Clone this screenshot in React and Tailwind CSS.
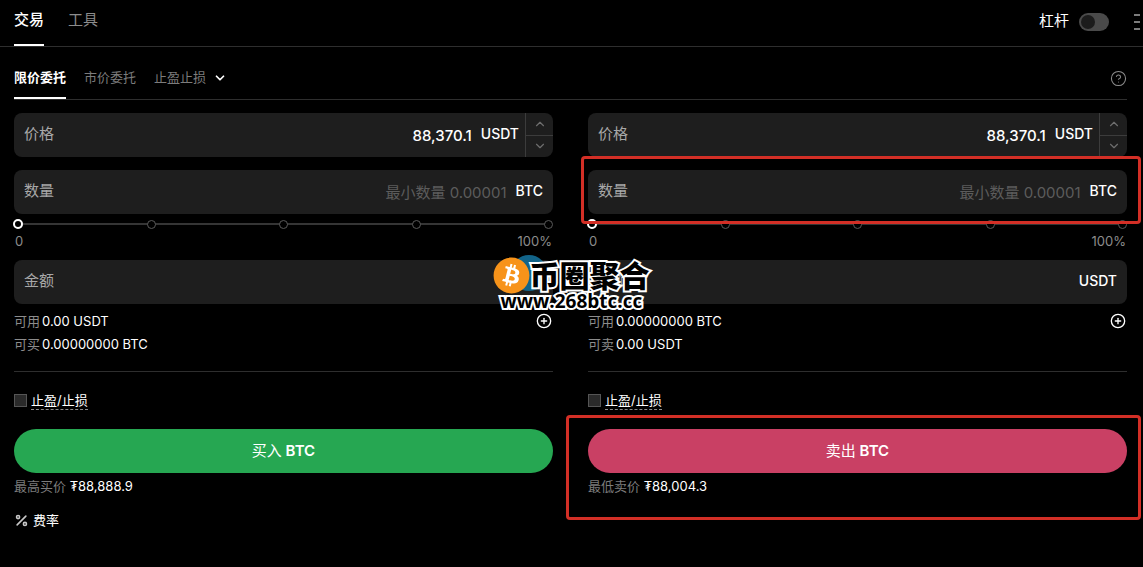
import { useState } from "react";
import { ChevronDown, ChevronUp, CirclePlus, CircleQuestionMark, Percent } from "lucide-react";
import { FaBitcoin } from "react-icons/fa";

const sides = [
    {
        id: "buy",
        available: "0.00 USDT",
        limitLabel: "可买",
        limit: "0.00000000 BTC",
        action: "买入",
        priceLabel: "最高买价",
        price: "₮88,888.9",
        color: "bg-[#26a752]",
    },
    {
        id: "sell",
        available: "0.00000000 BTC",
        limitLabel: "可卖",
        limit: "0.00 USDT",
        action: "卖出",
        priceLabel: "最低卖价",
        price: "₮88,004.3",
        color: "bg-[#c94064]",
        marked: true,
    },
];

const Highlight = ({ className }) => (
    <div className={`absolute border-3 border-[#d32f26] rounded-sm pointer-events-none z-10 ${className}`} />
);

const Field = ({ id, label, unit, placeholder, defaultValue, stepper }) => (
    <div className="flex h-11 leading-[42px] rounded-lg bg-[#1e1e1e] overflow-hidden">
        <label htmlFor={id} className="pl-[10px] text-[15px] text-[#a8a8a8] shrink-0">{label}</label>
        <input
            id={id}
            defaultValue={defaultValue}
            placeholder={placeholder}
            className="flex-1 min-w-0 h-11 bg-transparent outline-none text-right text-[15px] font-medium placeholder:font-normal placeholder:text-[#5c5c5c]"
        />
        <span className={`pl-[9px] text-sm leading-[42px] font-medium ${stepper ? "pr-[6px]" : "pr-[10px]"}`}>{unit}</span>
        {stepper && (
            <div className="flex flex-col w-7 h-full border-l border-[#3c3c3c] text-[#6e6e6e]">
                <button aria-label="增加" className="flex flex-1 items-center justify-center border-b border-[#3c3c3c]">
                    <ChevronUp size={14} />
                </button>
                <button aria-label="减少" className="flex flex-1 items-center justify-center">
                    <ChevronDown size={14} />
                </button>
            </div>
        )}
    </div>
);

const AmountSlider = () => {
    const [value, setValue] = useState(0);

    return (
        <div className="mt-[5px]">
            <div className="relative flex items-center justify-between h-[10px]">
                <div className="absolute inset-x-1 h-[2px] bg-[#353535]" />
                {[0, 25, 50, 75, 100].map((stop) => (
                    <span key={stop} className="relative size-[9px] rounded-full border border-[#5a5a5a] bg-black" />
                ))}
                <input
                    type="range"
                    aria-label="数量百分比"
                    value={value}
                    onChange={(e) => setValue(Number(e.target.value))}
                    className="absolute -inset-x-px h-[10px] appearance-none bg-transparent [&::-webkit-slider-thumb]:appearance-none [&::-webkit-slider-thumb]:size-[10px] [&::-webkit-slider-thumb]:rounded-full [&::-webkit-slider-thumb]:border-2 [&::-webkit-slider-thumb]:border-white [&::-webkit-slider-thumb]:bg-black"
                />
            </div>
            <div className="flex justify-between h-[31px] pt-[2px] px-px text-[13px] leading-5 text-[#8c8c8c]">
                <span>0</span>
                <span>100%</span>
            </div>
        </div>
    );
};

const OrderForm = ({ side }) => (
    <form className="min-w-0" onSubmit={(e) => e.preventDefault()}>
        <Field id={`${side.id}-price`} label="价格" unit="USDT" defaultValue="88,370.1" stepper />
        <div className="relative mt-[13px]">
            <Field id={`${side.id}-size`} label="数量" unit="BTC" placeholder="最小数量 0.00001" />
            {side.marked && <Highlight className="-left-[7px] -right-[14px] -top-[14px] -bottom-[10px]" />}
        </div>
        <AmountSlider />
        <Field id={`${side.id}-total`} label="金额" unit="USDT" />

        <div className="flex items-start justify-between pt-[6px] text-[13px] leading-[23px]">
            <div>
                <p><span className="text-[#8c8c8c]">可用</span><span className="ml-[2px]">{side.available}</span></p>
                <p><span className="text-[#8c8c8c]">{side.limitLabel}</span><span className="ml-[2px]">{side.limit}</span></p>
            </div>
            <button aria-label="充值" className="pt-[3px] pr-px">
                <CirclePlus size={16} />
            </button>
        </div>

        <div className="flex items-center gap-1 mt-[15px] h-[58px] border-t border-[#2e2e2e] text-[13px]">
            <input
                id={`${side.id}-tpsl`}
                type="checkbox"
                className="appearance-none size-[13px] border border-[#555] bg-[#2a2a2a] checked:bg-white"
            />
            <label htmlFor={`${side.id}-tpsl`} className="leading-[18px] border-b border-dashed border-[#8c8c8c]">止盈/止损</label>
        </div>

        <div className="relative">
            <button className={`block w-full h-11 rounded-full text-[15px] font-semibold ${side.color}`}>
                <span className="font-normal">{side.action}</span> BTC
            </button>
            <p className="pt-[3px] text-[13px] leading-5">
                <span className="text-[#7c7c7c]">{side.priceLabel}</span> {side.price}
            </p>
            {side.marked && <Highlight className="-left-[22px] -right-[14px] -top-[14px] -bottom-6" />}
        </div>
    </form>
);

const Watermark = () => (
    <div className="absolute left-1/2 top-[255px] -translate-x-1/2 w-[156px] h-[58px] pointer-events-none z-20 text-black font-black whitespace-nowrap">
        <div className="absolute left-[17px] top-0 size-9 rounded-full bg-[#126489]" />
        <div className="absolute left-px top-1 size-8 rounded-full bg-white" />
        <FaBitcoin size={37} className="absolute -left-px top-[2px] text-[#f7931a]" />
        <p className="absolute left-[36px] top-1 text-[30px] leading-[34px] [-webkit-text-stroke:4px_white] [paint-order:stroke_fill]">币圈聚合</p>
        <p className="absolute left-[7px] top-[36px] text-[19px] leading-5 font-bold font-['Open_Sans',sans-serif] [-webkit-text-stroke:4px_white] [paint-order:stroke_fill]">www.268btc.cc</p>
    </div>
);

const App = () => {
    return (
        <div className="relative min-h-screen bg-black text-white overflow-hidden font-['Inter','Noto_Sans_CJK_SC',sans-serif]">
            <header className="flex items-center justify-between h-[47px] pl-[14px] pr-[3px] border-b border-[#2e2e2e] text-[15px]">
                <nav className="flex gap-6 h-full">
                    <button className="pb-1 font-medium border-b-2 border-white">交易</button>
                    <button className="pb-1 text-[#8c8c8c] border-b-2 border-transparent">工具</button>
                </nav>
                <div className="flex items-center pb-[3px]">
                    <label htmlFor="margin" className="pr-[10px]">杠杆</label>
                    <input
                        id="margin"
                        type="checkbox"
                        role="switch"
                        className="appearance-none w-[30px] h-[18px] p-[2px] rounded-full bg-[#4a4a4a] before:block before:size-[14px] before:rounded-full before:bg-[#1c1c1c] checked:before:ml-3"
                    />
                    <button aria-label="菜单" className="flex flex-col gap-[5px] ml-[25px]">
                        <span className="w-[6px] h-[2px] bg-[#7c7c7c]" />
                        <span className="w-[6px] h-[2px] bg-[#7c7c7c]" />
                        <span className="w-[6px] h-[2px] bg-[#7c7c7c]" />
                    </button>
                </div>
            </header>

            <main className="pl-[14px] pr-4">
                <div className="flex items-center justify-between h-[53px] border-b border-[#2e2e2e] text-[13px]">
                    <nav className="flex gap-[18px] h-full text-[#7c7c7c]">
                        <button className="pt-3 font-semibold text-white border-b-2 border-white">限价委托</button>
                        <button className="pt-3 border-b-2 border-transparent">市价委托</button>
                        <button className="flex items-center gap-[7px] pt-3 border-b-2 border-transparent">
                            止盈止损 <ChevronDown size={14} strokeWidth={3} className="text-white" />
                        </button>
                    </nav>
                    <button aria-label="帮助" className="pt-[10px] text-[#8c8c8c]">
                        <CircleQuestionMark size={17} strokeWidth={1.5} />
                    </button>
                </div>

                <div className="grid grid-cols-2 gap-[35px] pt-[13px]">
                    {sides.map((side) => (
                        <OrderForm key={side.id} side={side} />
                    ))}
                </div>

                <a href="#fees" className="inline-flex items-center gap-1 mt-[14px] text-[13px] leading-5">
                    <Percent size={15} strokeWidth={2.5} className="text-[#c8c8c8]" />
                    费率
                </a>
            </main>

            <Watermark />
        </div>
    );
};

export default App;
